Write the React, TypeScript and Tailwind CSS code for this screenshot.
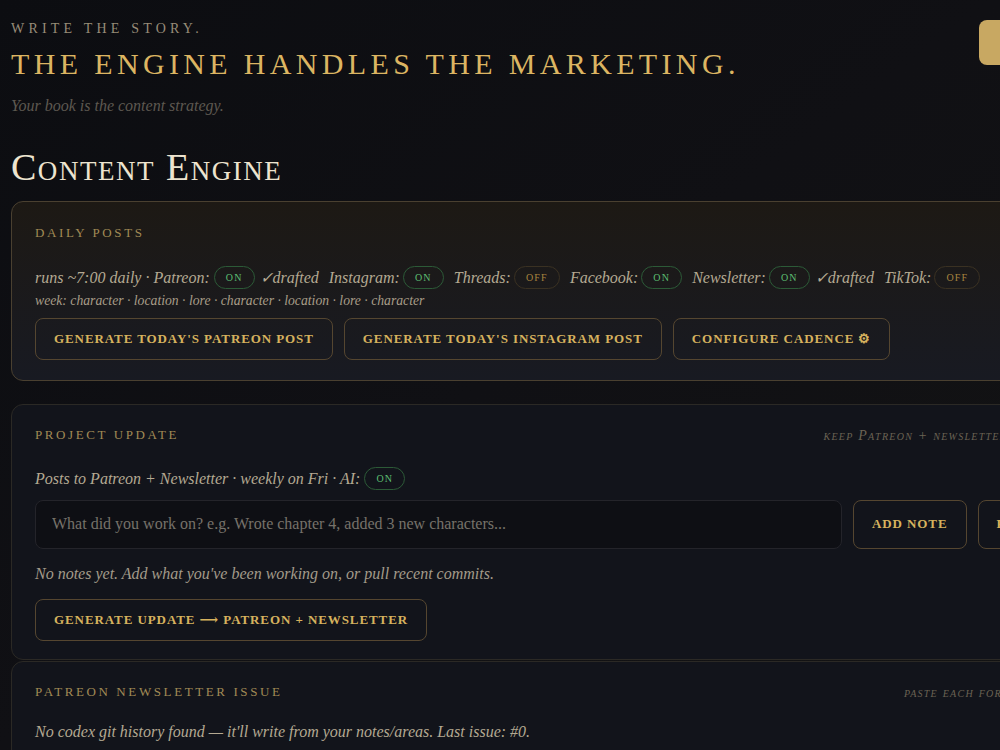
import clsx from "clsx";

const serif = "font-['Liberation_Serif','DejaVu_Serif',serif]";

function Pill({ on }: { on: boolean }) {
  return (
    <span
      className={clsx(
        "inline-flex h-[23px] items-center justify-center rounded-full border px-[11px] text-[10px] not-italic tracking-[0.12em]",
        on ? "border-[#2c5a37] text-[#5cbd72]" : "border-[#3a3122] text-[#a8843f]"
      )}
    >
      {on ? "ON" : "OFF"}
    </span>
  );
}

function GoldButton({ children, className }: { children: React.ReactNode; className?: string }) {
  return (
    <button
      className={clsx(
        "flex h-[42px] shrink-0 items-center rounded-lg border border-[#554630] bg-transparent px-[18px] text-[13px] font-bold uppercase tracking-[0.07em] text-[#d6b25e] whitespace-nowrap",
        className
      )}
    >
      {children}
    </button>
  );
}

function CardHead({ title, aside }: { title: string; aside?: string }) {
  return (
    <div className="flex items-center justify-between">
      <h3 className="text-[13px] uppercase tracking-[0.2em] text-[#a18a55]">{title}</h3>
      {aside && (
        <span className="text-[14px] italic tracking-[0.09em] text-[#6b6354] whitespace-nowrap [font-variant:small-caps]">
          {aside}
        </span>
      )}
    </div>
  );
}

type Channel = { name: string; on: boolean; drafted?: boolean };

const channels: Channel[] = [
  { name: "Instagram", on: true },
  { name: "Threads", on: false },
  { name: "Facebook", on: true },
  { name: "Newsletter", on: true, drafted: true },
  { name: "TikTok", on: false },
];

export default function App() {
  return (
    <div className={clsx("h-[750px] w-[1000px] overflow-hidden bg-gradient-to-br from-[#0c0d11] via-[#101014] to-[#131313]", serif)}>
      <div className="w-[1069px] pl-[11px] pt-[21px]">
        {/* page header */}
        <div className="flex items-start justify-between">
          <div>
            <p className="text-[14px] uppercase leading-4 tracking-[0.3em] text-[#978c78]">Write the story.</p>
            <h1 className="mt-[11px] text-[30px] uppercase leading-8 tracking-[0.145em] text-[#dcb562]">
              The engine handles the marketing.
            </h1>
            <p className="mt-[16px] text-[16px] italic leading-5 text-[#5d5850]">Your book is the content strategy.</p>
          </div>
          <button className="mt-[-1px] h-[45px] w-[90px] rounded-lg bg-[#c8a862] pl-[28px] text-left text-[13px] font-bold uppercase text-[#1a1610]">
            Publish
          </button>
        </div>

        <h2 className="mt-[31px] text-[38px] leading-10 tracking-[0.04em] text-[#ede4cf] [font-variant:small-caps]">
          Content Engine
        </h2>

        {/* daily posts */}
        <section className="mt-[14px] rounded-xl border border-[#4a4030] bg-gradient-to-b from-[#1d1914] to-[#181a22] px-[23px] pb-[20px] pt-[21px]">
          <CardHead title="Daily posts" />
          <div className="mt-[23px] flex flex-wrap items-center text-[16px] italic leading-6 text-[#b4a992]">
            <span className="mr-[4px]">runs ~7:00 daily · Patreon:</span>
            <Pill on />
            <span className="ml-[5px] mr-[10px]">✓drafted</span>
            {channels.map((c) => (
              <span key={c.name} className="mr-[10px] flex items-center">
                <span className="mr-[3px]">{c.name}:</span>
                <Pill on={c.on} />
                {c.drafted && <span className="ml-[5px]">✓drafted</span>}
              </span>
            ))}
          </div>
          <p className="mt-[1px] text-[13.7px] italic leading-5 text-[#a89d88]">
            week: character · location · lore · character · location · lore · character
          </p>
          <div className="mt-[7px] flex gap-[11px]">
            <GoldButton>Generate today's Patreon post</GoldButton>
            <GoldButton>Generate today's Instagram post</GoldButton>
            <GoldButton>Configure cadence ⚙</GoldButton>
          </div>
        </section>

        {/* weekly project update */}
        <section className="mt-[23px] rounded-xl border border-[#2b2925] bg-[#12141b] px-[23px] pb-[18px] pt-[20px]">
          <CardHead title="Project update" aside="keep Patreon + newsletter warm" />
          <div className="mt-[21px] flex items-center text-[16px] italic leading-6 text-[#b4a992]">
            <span className="mr-[4px]">Posts to Patreon + Newsletter · weekly on Fri · AI:</span>
            <Pill on />
          </div>
          <div className="mt-[9px] flex gap-[11px]">
            <input
              className="h-[49px] w-[807px] shrink-0 rounded-lg border border-[#24242a] bg-[#0e0f14] px-[16px] text-[16px] text-[#c9c0ad] outline-none placeholder:text-[#76726a]"
              placeholder="What did you work on? e.g. Wrote chapter 4, added 3 new characters..."
            />
            <GoldButton className="h-[49px]">Add note</GoldButton>
            <GoldButton className="h-[49px]">Pull commits</GoldButton>
          </div>
          <p className="mt-[13px] text-[16px] italic leading-6 text-[#a39b8a]">
            No notes yet. Add what you've been working on, or pull recent commits.
          </p>
          <div className="mt-[13px] flex">
            <GoldButton>Generate update ⟶ Patreon + Newsletter</GoldButton>
          </div>
        </section>

        {/* newsletter issue */}
        <section className="mt-[1px] rounded-xl border border-[#2b2925] bg-[#12141b] px-[23px] pb-[20px] pt-[20px]">
          <CardHead title="Patreon newsletter issue" aside="paste each fortnight" />
          <p className="mt-[17px] text-[16px] italic leading-6 text-[#b4a992]">
            No codex git history found — it'll write from your notes/areas. Last issue: #0.
          </p>
        </section>
      </div>
    </div>
  );
}
